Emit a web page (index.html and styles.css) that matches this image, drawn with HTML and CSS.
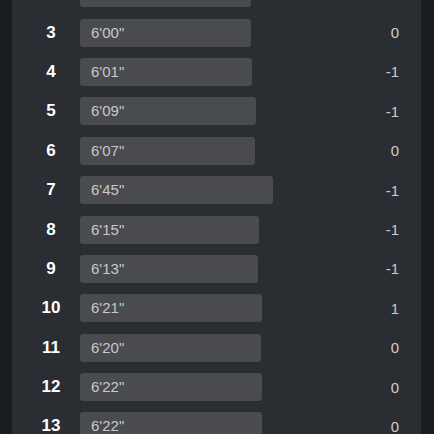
FILE: index.html
```html
<!DOCTYPE html>
<html lang="en">
<head>
    <meta charset="UTF-8">
    <meta name="viewport" content="width=device-width, initial-scale=1.0">
    <title>Splits</title>
    <link rel="stylesheet" href="styles.css">
</head>
<body>

    <div class="panel">
        <!-- Kilometre splits -->
        <ul class="splits">
            <li class="split"><span class="km">2</span><span class="pace-cell"><span class="pace" style="width: 171px">6'00"</span></span><span class="diff">0</span></li>
            <li class="split"><span class="km">3</span><span class="pace-cell"><span class="pace" style="width: 171px">6'00"</span></span><span class="diff">0</span></li>
            <li class="split"><span class="km">4</span><span class="pace-cell"><span class="pace" style="width: 172px">6'01"</span></span><span class="diff">-1</span></li>
            <li class="split"><span class="km">5</span><span class="pace-cell"><span class="pace" style="width: 176px">6'09"</span></span><span class="diff">-1</span></li>
            <li class="split"><span class="km">6</span><span class="pace-cell"><span class="pace" style="width: 175px">6'07"</span></span><span class="diff">0</span></li>
            <li class="split"><span class="km">7</span><span class="pace-cell"><span class="pace" style="width: 193px">6'45"</span></span><span class="diff">-1</span></li>
            <li class="split"><span class="km">8</span><span class="pace-cell"><span class="pace" style="width: 179px">6'15"</span></span><span class="diff">-1</span></li>
            <li class="split"><span class="km">9</span><span class="pace-cell"><span class="pace" style="width: 178px">6'13"</span></span><span class="diff">-1</span></li>
            <li class="split"><span class="km">10</span><span class="pace-cell"><span class="pace" style="width: 182px">6'21"</span></span><span class="diff">1</span></li>
            <li class="split"><span class="km">11</span><span class="pace-cell"><span class="pace" style="width: 181px">6'20"</span></span><span class="diff">0</span></li>
            <li class="split"><span class="km">12</span><span class="pace-cell"><span class="pace" style="width: 182px">6'22"</span></span><span class="diff">0</span></li>
            <li class="split"><span class="km">13</span><span class="pace-cell"><span class="pace" style="width: 182px">6'22"</span></span><span class="diff">0</span></li>
        </ul>
    </div>

</body>
</html>
```

FILE: styles.css
```css
/* Page */
body {
    margin: 0;
    padding: 0 13px 0 12px;
    background-color: #1b1c1e;
    font-family: "Liberation Sans", Arial, sans-serif;
    height: 434px;
    overflow: hidden;
}

/* Dark card holding the list */
.panel {
    background-color: #2a2d31;
    height: 434px;
    overflow: hidden;
}

.splits {
    list-style: none;
    margin: -26.5px 0 0 0; /* list is scrolled a bit */
    padding: 0;
}

.split {
    display: flex;
    align-items: center;
    height: 39.4px;
}

.km {
    width: 58px;
    padding-left: 10px;
    text-align: center;
    color: #ffffff;
    font-weight: bold;
    font-size: 17px;
}

.pace-cell {
    flex: 1;
}

.pace {
    display: block;
    box-sizing: border-box;
    height: 28px;
    line-height: 28px;
    padding-left: 11px;
    background-color: #4a4b4f;
    border-radius: 3px;
    color: #c8c8c8;
    font-size: 15px;
}

.diff {
    width: 60px;
    padding-right: 22px;
    text-align: right;
    color: #cccccc;
    font-size: 15px;
}
```
